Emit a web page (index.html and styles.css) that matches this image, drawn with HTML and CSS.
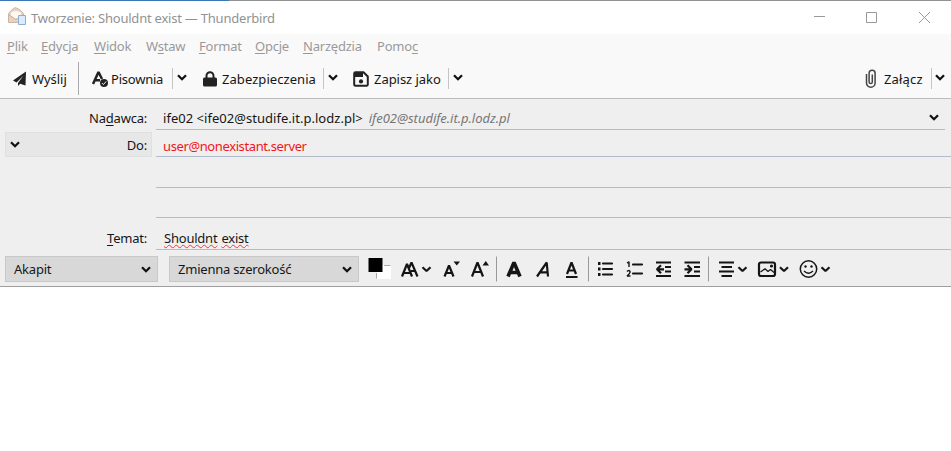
FILE: index.html
```html
<!DOCTYPE html>
<html lang="pl">
<head>
<meta charset="utf-8">
<title>Tworzenie: Shouldnt exist — Thunderbird</title>
<link rel="stylesheet" href="styles.css">
</head>
<body>
<svg class="defs" width="0" height="0">
  <symbol id="chev" viewBox="0 0 10 7"><path d="M1 1.3 5 5.2 9 1.3" fill="none" stroke="#111" stroke-width="2.3"/></symbol>
</svg>
<div class="window">
  <div class="edge"><span></span></div>
  <header class="titlebar">
    <svg class="app" width="20" height="20" viewBox="0 0 20 20">
      <path d="M1.500 6.500 Q7 0 9 .8 Q13 2 16.500 6.500V15.500H1.500Z" fill="#e8d3c2" stroke="#cdb5a1"/>
      <path d="M4 7V5.500Q9 2.500 14 5.500V9L9 12 4 9Z" fill="#fff9f1"/>
      <path d="M2 8 9 12.500 16 8" fill="none" stroke="#cbb09a"/>
      <path d="M11.500 8.500H18.500V17.500H11.500Z" fill="#dcebfb" stroke="#8eafd4"/>
    </svg>
    <span class="title">Tworzenie: Shouldnt exist — Thunderbird</span>
    <svg class="controls" width="120" height="14" viewBox="0 0 120 14" fill="none" stroke="#999"><path d="M1 5.500H12M53.500 1.500H63.500V11.500H53.500ZM106 1 117 12M117 1 106 12"/></svg>
  </header>
  <nav class="menu">
    <span class="m1"><u>P</u>lik</span><span class="m2"><u>E</u>dycja</span><span class="m3"><u>W</u>idok</span><span class="m4">W<u>s</u>taw</span><span class="m5"><u>F</u>ormat</span><span class="m6"><u>O</u>pcje</span><span class="m7"><u>N</u>arzędzia</span><span class="m8">Pomo<u>c</u></span>
  </nav>
  <div class="toolbar">
    <div class="tool send"><svg width="14" height="16" viewBox="0 0 14 16"><path d="M13 .5 0 9.500 3.500 11.500 10.500 4.500 5 12V15L7.200 12.700 12.500 14.500Z" fill="#222"/></svg><span>Wyślij</span></div>
    <i class="sep tall"></i>
    <div class="tool spell"><svg width="17" height="18" viewBox="0 0 17 18"><path d="M1 14 6.500 2 10 9M3 10.300H8" fill="none" stroke="#222" stroke-width="2.500" stroke-linejoin="bevel"/><circle cx="12" cy="13" r="4" fill="#222"/><path d="m9.800 13 1.600 1.600 2.800-3.200" fill="none" stroke="#eee"/></svg><span>Pisownia</span></div>
    <i class="sep"></i><svg class="chev"><use href="#chev"/></svg>
    <div class="tool secure"><svg width="14" height="16" viewBox="0 0 14 16"><path d="M3.500 8V4.800a3.500 3.500 0 0 1 7 0V8" fill="none" stroke="#222" stroke-width="2"/><rect y="6.500" width="14" height="9" rx="1.500" fill="#222"/></svg><span>Zabezpieczenia</span></div>
    <i class="sep"></i><svg class="chev"><use href="#chev"/></svg>
    <div class="tool save"><svg width="16" height="16" viewBox="0 0 16 16"><path d="M2.500 1.200H10.500L14.800 5.500V13.500Q14.800 14.800 13.500 14.800H2.500Q1.200 14.800 1.200 13.500V2.500Q1.200 1.200 2.500 1.200Z" fill="#f9f9f9" stroke="#222" stroke-width="2"/><path d="M2 2H10V6H2Z" fill="#222"/><circle cx="8" cy="10.400" r="2.100" fill="#222"/></svg><span>Zapisz jako</span></div>
    <i class="sep"></i><svg class="chev"><use href="#chev"/></svg>
    <div class="tool attach"><svg width="12" height="20" viewBox="0 0 12 20"><path d="M1.500 5V14a4.300 4.300 0 0 0 8.600 0V4.300a3 3 0 0 0-6 0V13a1.600 1.600 0 0 0 3.200 0V5.500" fill="none" stroke="#444" stroke-width="1.500"/></svg><span>Załącz</span></div>
    <i class="sep"></i><svg class="chev"><use href="#chev"/></svg>
  </div>
  <section class="headers">
    <div class="label from"><span>Na<u>d</u>awca:</span></div>
    <div class="field from"><span class="sender">ife02 &lt;ife02@studife.it.p.lodz.pl&gt;</span><em>ife02@studife.it.p.lodz.pl</em><svg class="chev"><use href="#chev"/></svg></div>
    <div class="label to"><svg class="chev"><use href="#chev"/></svg><span>Do:</span></div>
    <div class="field to"><span class="recipient">user@nonexistant.server</span></div>
    <div class="field blank"></div>
    <div class="field blank"></div>
    <div class="label subject"><span><u>T</u>emat:</span></div>
    <div class="field subject"><span class="bad">Shouldnt</span> <span class="bad">exist</span></div>
  </section>
  <div class="format">
    <div class="select para"><span>Akapit</span><svg class="chev"><use href="#chev"/></svg></div>
    <div class="select font"><span>Zmienna szerokość</span><svg class="chev"><use href="#chev"/></svg></div>
    <svg class="icons" width="480" height="30" viewBox="360 254 480 30" fill="none" stroke="#151515" stroke-width="2.200" stroke-linejoin="bevel">
      <path d="M377 265H391V279H377Z" fill="#fff" stroke="none"/><path d="M384 265.500H390.500M376.500 273V278.500" stroke="#aaa" stroke-width="1"/><path d="M368.500 258H382.500V272H368.500Z" fill="#000" stroke="none"/>
      <path d="M402 276.500 407 264 412 276.500M404 273H410M409 268 411.500 262.500 417.500 276.500M411 271H415"/>
      <path d="M422.500 267.300 426.500 271 430.500 267.300"/>
      <path d="M444.500 276.500 449 265.500 453.500 276.500M446.500 273H451.500"/><path d="M453.500 261.500H460L456.750 265.500Z" fill="#151515" stroke="none"/>
      <path d="M472 276.500 477.500 262.500 483 276.500M474 272H481"/><path d="M482.500 265.500H489L485.750 261Z" fill="#151515" stroke="none"/>
      <path d="M496.500 256.500V281.500M588.500 256.500V281.500M708.500 256.500V281.500" stroke="#999" stroke-width="1"/>
      <path d="M508 276.500 514 262.500 520 276.500M510 272.500H518" stroke-width="3.600"/>
      <path d="M537 276.500 546.700 262.500 548 276.500M540 272.300H548"/>
      <path d="M567 274 571.500 262.500 576 274M569 270.500H574M566 277H577.500"/>
      <path d="M603 263.500H612M603 269H612M603 274.500H612" stroke-linecap="round"/><path d="M598 263.500H600.500M598 269H600.500M598 274.500H600.500" stroke-width="2.800"/>
      <path d="M633 264.500H642M633 273.500H642" stroke-linecap="round"/><path d="M627 263 629 261.800V267M627 271.500Q628.500 269.800 630 271.200Q630.500 273 627 276H630.500" stroke-width="1.400"/>
      <path d="M656 262.500H671M656 276H671M665 267H671M665 271.500H671M664 269.300H657.500M661 265.300 657 269.300 661 273.300"/>
      <path d="M684.500 262.500H700M684.500 276H700M694 267H700M694 271.500H700M684.500 269.300H691M687.500 265.300 691.500 269.300 687.500 273.300"/>
      <path d="M719 262.500H734M721.500 267H732M719 271.500H734M721.500 276H732"/><path d="M738.500 267.300 742.500 271 746.500 267.300"/>
      <rect x="759" y="262.500" width="16" height="13.500" rx="2"/><path d="M760.500 272 765 268.800 768 271.500 770.500 269.500 774 272.500" stroke-width="1.200"/><circle cx="771.500" cy="266" r="1.600" fill="#151515" stroke="none"/><path d="M780 267.300 784 271 788 267.300"/>
      <circle cx="808.500" cy="269" r="8.200" stroke-width="1.500"/><path d="M804 271Q808.500 275.500 813 271" stroke-width="1.300"/><circle cx="805.500" cy="266.500" r="1.200" fill="#151515" stroke="none"/><circle cx="811.500" cy="266.500" r="1.200" fill="#151515" stroke="none"/><path d="M821.500 267.300 825.500 271 829.500 267.300"/>
    </svg>
  </div>
  <main class="editor"></main>
</div>
</body>
</html>
```
FILE: styles.css
```css
* { box-sizing: border-box; }
body { margin: 0; background: #fff; font: 13px/18px "Noto Sans", "Open Sans", sans-serif; letter-spacing: -.22px; color: #161616; overflow: hidden; }
svg { display: block; flex: none; }
.defs { position: absolute; }
.window { width: 951px; height: 451px; display: flex; flex-direction: column; white-space: nowrap; }
u { text-decoration-thickness: 1px; text-underline-offset: 2px; }
.edge { height: 1px; background: #929292; flex: none; }
.edge span { display: block; width: 229px; height: 1px; background: #3977b6; }
.titlebar { height: 33px; flex: none; display: flex; align-items: center; padding: 0 18px 0 7px; color: #929292; }
.app { margin-top: -2px; }
.title { margin-left: 4px; }
.controls { margin-left: auto; }
.menu { height: 25px; flex: none; display: flex; align-items: center; padding: 0 0 2px 7px; background: #f9f9f9; color: #999; }
.m1 { width: 34px; } .m2 { width: 53px; } .m3 { width: 52px; } .m4 { width: 53px; }
.m5 { width: 56px; } .m6 { width: 48px; } .m7 { width: 74px; }
.toolbar { height: 40px; flex: none; display: flex; align-items: center; background: #f9f9f9; border-bottom: 1px solid #bcbcbc; padding: 0 6px 0 13px; }
.tool { display: flex; align-items: center; gap: 5px; flex: none; }
.send { width: 65px; letter-spacing: -.05px; }
.spell { width: 80px; margin-left: 13px; gap: 2px; }
.secure { width: 120px; margin-left: 16px; letter-spacing: .06px; }
.save { width: 95px; margin-left: 15px; letter-spacing: -.05px; }
.attach { margin-left: auto; width: 66px; gap: 7px; letter-spacing: .18px; }
.sep { width: 1px; height: 21px; background: #c4c4c4; flex: none; margin-top: -1px; }
.sep.tall { height: 33px; background: #aaa; }
.chev { width: 10px; height: 7px; }
.toolbar .chev { margin: -2px 0 0 4px; }
.toolbar .attach ~ .chev { margin-left: 3px; }
.headers { height: 157px; flex: none; background: #efefef; display: grid; grid-template-columns: 152px 1fr; grid-template-rows: 31px 27px 31px 30px 32px; column-gap: 4px; }
.label { display: flex; justify-content: flex-end; align-items: center; padding-right: 5px; }
.label.from { padding-top: 7px; }
.label.to { margin: 2px 0 0 5px; height: 25px; background: #e7e7e7; border: 1px solid #e0e0e0; padding: 0 4px; justify-content: space-between; }
.label.subject { padding-top: 8px; }
.field { grid-column: 2; display: flex; align-items: center; border-bottom: 1px solid #b2bccb; padding-left: 7px; }
.label.subject, .field.subject { grid-row: 5; }
.field.from { padding: 8px 6px 0 7px; margin-right: 6px; }
.field.from .chev { margin: -2px 0 0 auto; }
.sender { letter-spacing: .03px; }
.field.to { padding-top: 5px; }
.field.subject { padding: 9px 0 0 8px; gap: 4px; }
em { color: #777; margin-left: 6px; letter-spacing: -.02px; }
.recipient { color: #f21616; letter-spacing: -.39px; }
.bad { text-decoration: underline wavy #f33; text-decoration-thickness: 1px; text-underline-offset: 1px; text-decoration-skip-ink: none; }
.format { height: 31px; flex: none; display: flex; align-items: flex-start; background: #efefef; border-bottom: 1px solid #9f9f9f; padding-left: 5px; }
.select { height: 26px; background: #d8d8d8; border: 1px solid #c8c8c8; display: flex; align-items: center; justify-content: space-between; padding: 0 6px 0 8px; }
.para { width: 153px; }
.font { width: 190px; margin-left: 11px; }
.icons { margin: -2px 0 0 1px; }
.editor { flex: 1; background: #fff; }
```
